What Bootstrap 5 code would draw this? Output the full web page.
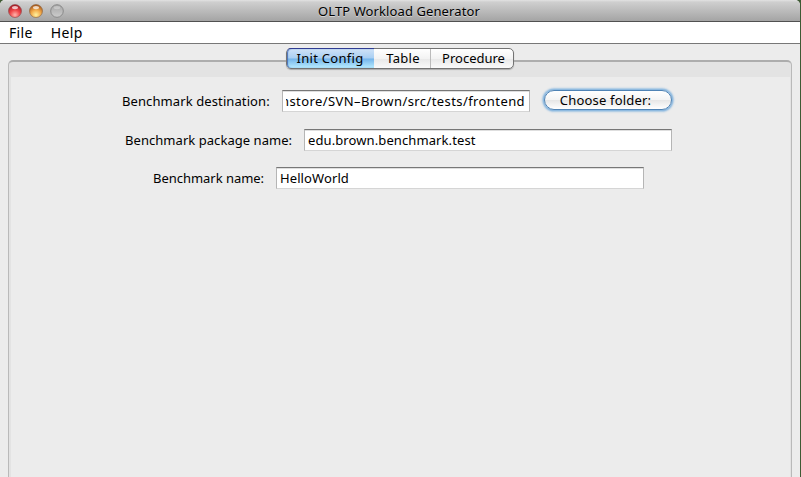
<!DOCTYPE html>
<html lang="en">
<head>
<meta charset="utf-8">
<meta name="viewport" content="width=device-width, initial-scale=1">
<title>OLTP Workload Generator</title>
<link href="https://cdn.jsdelivr.net/npm/bootstrap@5.3.0/dist/css/bootstrap.min.css" rel="stylesheet">
<style>
html { background: #3f5a34; }
body { font: 13px/16px "Lucida Grande", "Noto Sans", "Open Sans", sans-serif; color: #000; background: #3f5a34; height: 477px; overflow: hidden; }
.window { width: 800px; height: 477px; background: #ececec; border-radius: 5px 5px 0 0; overflow: hidden; }
.titlebar { height: 22px; background: linear-gradient(#e2e2e2 0, #cfcfcf 2px, #a4a4a4 21px); border-bottom: 1px solid #515151; text-shadow: 0 1px 0 #d5d5d5; padding: 1px 0 0 8px; }
.light { width: 14px; height: 14px; margin-right: 7px; margin-top: 3px; }
.caption { margin-left: 247px; line-height: 20px; letter-spacing: .1px; }
.menus { height: 22px; background: #fff; border-bottom: 1px solid #777; font-size: 14px; line-height: 21px; padding-left: 9px; letter-spacing: .35px; }
.menus .nav-link { color: #000; padding: 0; }
.menu-gap { margin-right: 18px; }
.pane { margin: 16px 8px 0; height: 440px; border: 1px solid #b9b9b9; border-top: 2px solid #adadad; border-radius: 5px 5px 0 0; background: #e3e3e3; padding: 15px 1px 0 2px; }
.pane-body { background: #ececec; height: 413px; padding-top: 13px; }
.tabs { height: 21px; margin: -29px 0 8px 275px; width: 228px; border: 1px solid #737373; border-radius: 5px; background: linear-gradient(#fff, #f3f3f3 50%, #e8e8e8 51%, #fafafa); box-shadow: 0 1px 1px #aaa; }
.tabs .btn { border: 0; border-radius: 0; padding: 0; font-size: 13px; line-height: 19px; color: #000; border-right: 1px solid #bbb; }
.tabs .btn:last-child { border: 0; }
.tabs .btn.active { color: #000; background: linear-gradient(#cfe2f7, #a9cff3 48%, #74b4ea 52%, #b8ecff); border: 0; border-radius: 4px 0 0 4px; box-shadow: 0 -1px 0 #303c92, inset 1px 0 1px #4a6fb5; }
.tabs .tab-a { width: 87px; letter-spacing: .28px; padding-right: 1px; } .tabs .tab-b { width: 57px; letter-spacing: .3px; padding-left: 2px; } .tabs .tab-c { width: 82px; padding-left: 3px; }
.field-label { line-height: 22px; white-space: nowrap; }
.field-box { height: 22px; border: 1px solid #b5b5b5; border-top-color: #777; border-bottom-color: #d5d5d5; background: #fff; box-shadow: inset 0 1px 0 #dedede; padding: 0 3px; line-height: 20px; overflow: hidden; white-space: nowrap; }
.clip { overflow: hidden; display: flex; justify-content: flex-end; width: 239px; letter-spacing: .41px; }
.line-a { padding-left: 111px; height: 39px; } .line-b { padding-left: 114px; height: 38px; } .line-c { padding-left: 142px; }
.line-a .field-label { width: 160px; letter-spacing: .1px; } .line-b .field-label { width: 179px; letter-spacing: .05px; } .line-c .field-label { width: 123px; letter-spacing: -.03px; }
.line-a .field-box { width: 248px; } .line-b .field-box, .line-c .field-box { width: 368px; letter-spacing: .1px; }
.choose { width: 128px; height: 20px; margin: 0 0 0 14px; border: 1px solid #4f83b5; border-radius: 10px; padding: 0 5px 0 0; font-size: 13px; line-height: 19px; letter-spacing: .18px; color: #000; background: linear-gradient(#fff, #f4f4f4 49%, #e6e6e6 51%, #fff); box-shadow: 0 0 2px 1.5px #7db1de; }
</style>
<script src="https://cdn.jsdelivr.net/npm/bootstrap@5.3.0/dist/js/bootstrap.bundle.min.js"></script>
</head>
<body>
<main class="window">
  <header class="titlebar d-flex">
    <svg class="light" viewBox="0 0 14 14"><defs><radialGradient id="r" cx=".5" cy=".8" r=".75"><stop stop-color="#ffb6ad"/><stop offset=".5" stop-color="#f0484a"/><stop offset="1" stop-color="#a81c26"/></radialGradient><radialGradient id="y" cx=".5" cy=".8" r=".75"><stop stop-color="#fff3a0"/><stop offset=".5" stop-color="#f3ac4b"/><stop offset="1" stop-color="#a85a1f"/></radialGradient><linearGradient id="g" x2="0" y2="1"><stop stop-color="#a5a5a5"/><stop offset="1" stop-color="#cdcdcd"/></linearGradient></defs><circle cx="7" cy="7" r="6.5" fill="url(#r)" stroke="#8b4448" stroke-width=".6"/><ellipse cx="7" cy="3.6" rx="3" ry="1.7" fill="#fff" opacity=".7"/></svg>
    <svg class="light" viewBox="0 0 14 14"><circle cx="7" cy="7" r="6.5" fill="url(#y)" stroke="#8a6239" stroke-width=".6"/><ellipse cx="7" cy="3.6" rx="3" ry="1.7" fill="#fff" opacity=".7"/></svg>
    <svg class="light" viewBox="0 0 14 14"><circle cx="7" cy="7" r="6.3" fill="url(#g)" stroke="#858585" stroke-width=".9"/><ellipse cx="7" cy="3.6" rx="3.3" ry="1.6" fill="#fff" opacity=".3"/></svg>
    <span class="caption">OLTP Workload Generator</span>
  </header>
  <nav class="menus nav"><a class="nav-link menu-gap">File</a><a class="nav-link">Help</a></nav>
  <section class="pane">
    <div class="tabs d-flex" role="tablist">
      <button class="btn tab-a active">Init Config</button><button class="btn tab-b">Table</button><button class="btn tab-c">Procedure</button>
    </div>
    <form class="pane-body">
      <div class="line-a d-flex align-items-start">
        <span class="field-label">Benchmark destination:</span>
        <div class="field-box"><div class="clip"><span>hstore/SVN–Brown/src/tests/frontend</span></div></div>
        <button type="button" class="btn choose">Choose folder:</button>
      </div>
      <div class="line-b d-flex align-items-start">
        <span class="field-label">Benchmark package name:</span>
        <div class="field-box">edu.brown.benchmark.test</div>
      </div>
      <div class="line-c d-flex align-items-start">
        <span class="field-label">Benchmark name:</span>
        <div class="field-box">HelloWorld</div>
      </div>
    </form>
  </section>
</main>
</body>
</html>
